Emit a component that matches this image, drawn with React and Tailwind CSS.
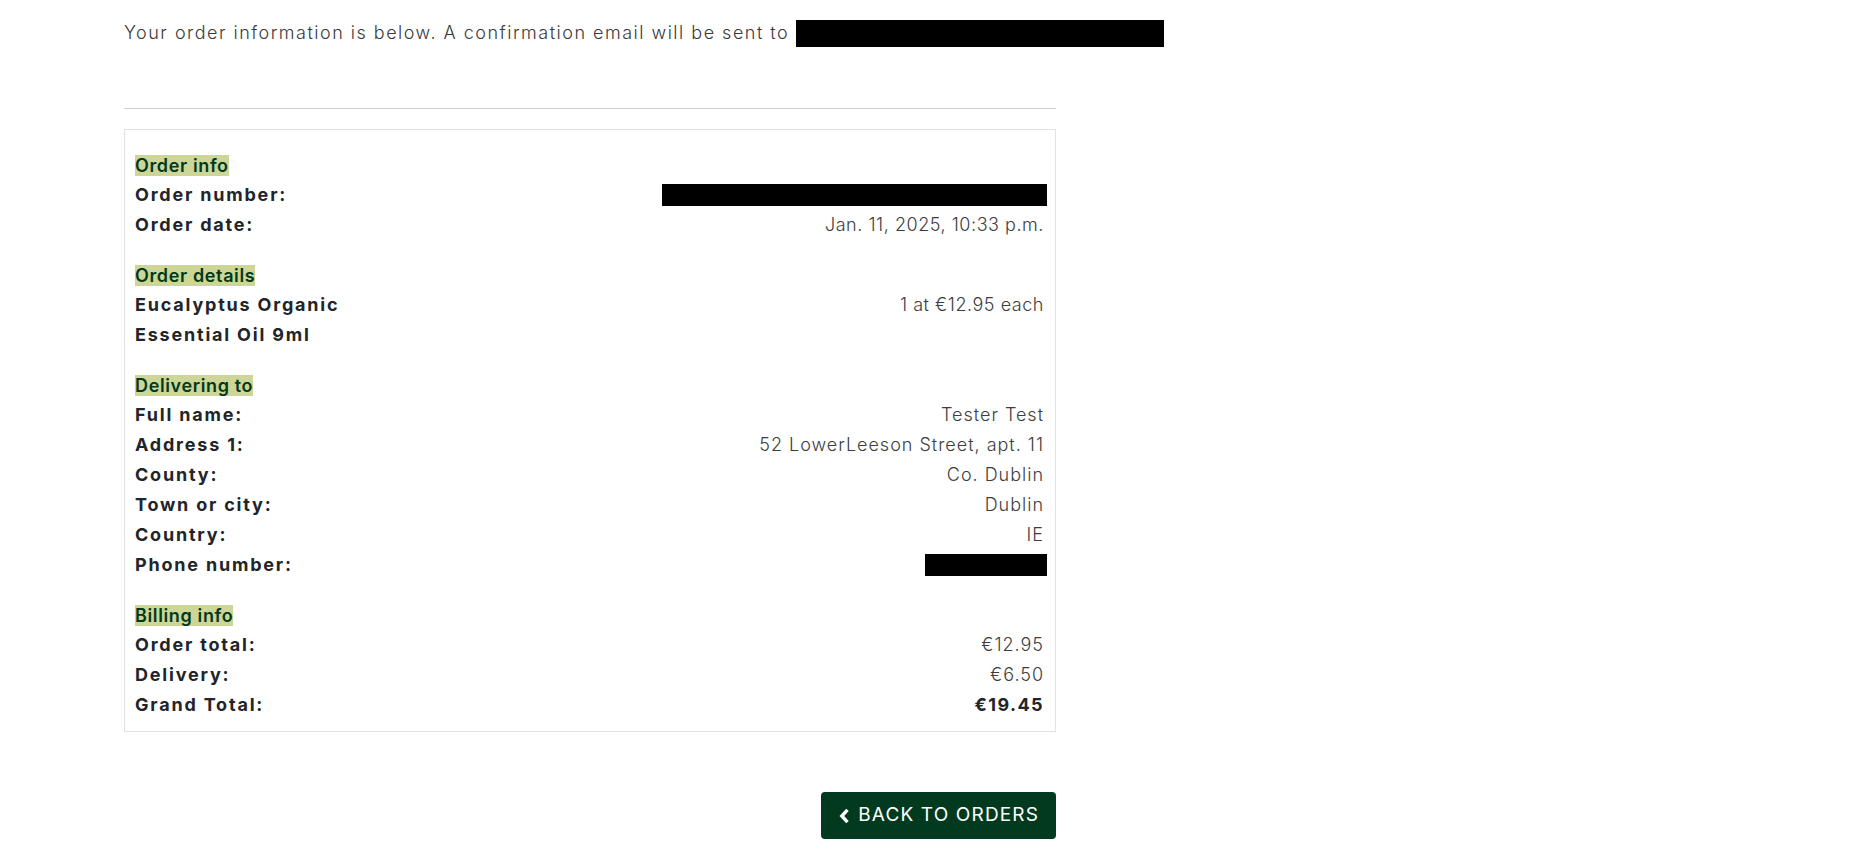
const font = { fontFamily: 'Inter, "Open Sans", sans-serif' }

const labelCls = 'font-bold text-[#212529] tracking-[0.1em]'

function Heading({ children }) {
  return (
    <div className="h-[30px] flex items-center">
      <span className="bg-[#cdd597] text-[#00391c] font-semibold leading-[21px] tracking-[0.035em]">{children}</span>
    </div>
  )
}

function Row({ label, value, strong, tight }) {
  let valueCls = 'font-light text-[#3d3d3d] text-right tracking-[0.055em]'
  if (tight) valueCls = 'font-light text-[#3d3d3d] text-right tracking-[0.03em]'
  if (strong) valueCls = 'font-bold text-[#212529] text-right tracking-[0.08em]'
  return (
    <div className="flex justify-between items-start leading-[30px]">
      <div className={labelCls}>{label}</div>
      <div className={valueCls}>{value}</div>
    </div>
  )
}

function Redacted({ w }) {
  return (
    <div className="flex items-center h-[30px] -mr-[3px]">
      <div className={`${w} h-[22px] bg-black`} />
    </div>
  )
}

export default function App() {
  return (
    <div style={font} className="min-h-[850px] bg-white pl-[124px] pt-[18px] text-[18px]">
      <div className="flex items-center leading-[30px] font-light text-[#3a3a3a] tracking-[0.083em]">
        <span>Your order information is below. A confirmation email will be sent to&nbsp;</span>
        <span className="inline-block w-[368px] h-[27px] bg-black" />
      </div>

      <div className="w-[932px]">
        <hr className="mt-[60px] border-t border-[#cfcfcf]" />

        <div className="mt-[20px] border border-[#dfe2e6] pl-[10px] pr-[11px] pt-[20px] pb-[11px]">
          <section className="mb-[20px]">
            <Heading>Order info</Heading>
            <div className="flex justify-between leading-[30px]">
              <div className={labelCls}>Order number:</div>
              <Redacted w="w-[385px]" />
            </div>
            <Row label="Order date:" value="Jan. 11, 2025, 10:33 p.m." tight />
          </section>

          <section className="mb-[20px]">
            <Heading>Order details</Heading>
            <Row
              label={
                <>
                  Eucalyptus Organic
                  <br />
                  Essential Oil 9ml
                </>
              }
              value="1 at €12.95 each"
              tight
            />
          </section>

          <section className="mb-[20px]">
            <Heading>Delivering to</Heading>
            <Row label="Full name:" value="Tester Test" />
            <Row label="Address 1:" value="52 LowerLeeson Street, apt. 11" />
            <Row label="County:" value="Co. Dublin" />
            <Row label="Town or city:" value="Dublin" />
            <Row label="Country:" value="IE" />
            <div className="flex justify-between leading-[30px]">
              <div className={labelCls}>Phone number:</div>
              <Redacted w="w-[122px]" />
            </div>
          </section>

          <section>
            <Heading>Billing info</Heading>
            <Row label="Order total:" value="€12.95" />
            <Row label="Delivery:" value="€6.50" />
            <Row label="Grand Total:" value="€19.45" strong />
          </section>
        </div>

        <div className="flex justify-end mt-[60px]">
          <button className="flex items-center gap-[8px] h-[47px] pl-[18px] pr-[17px] rounded-[4px] bg-[#023a1f] text-white text-[19px] uppercase tracking-[0.06em]">
            <svg width="11" height="16" viewBox="0 0 11 16" fill="none">
              <path d="M8.5 1.8 L2.8 8 L8.5 14.2" stroke="currentColor" strokeWidth="3.4" />
            </svg>
            <span>Back to orders</span>
          </button>
        </div>
      </div>
    </div>
  )
}
